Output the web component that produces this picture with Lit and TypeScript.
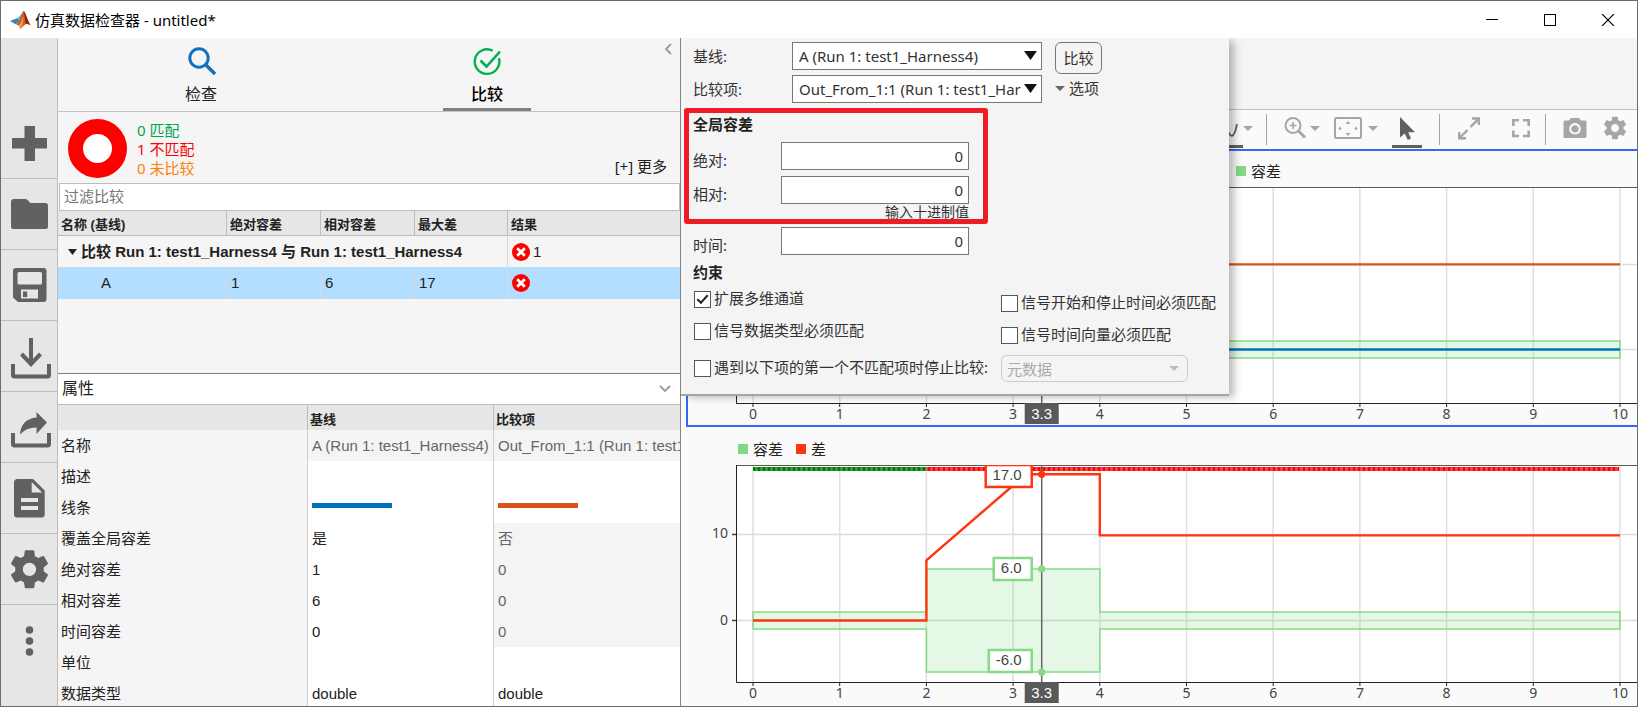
import { LitElement, html, svg, css, nothing } from "lit";
import { customElement, property, state } from "lit/decorators.js";
import { classMap } from "lit/directives/class-map.js";

const GEAR =
  "M19.43 12.98c.04-.32.07-.64.07-.98s-.03-.66-.07-.98l2.11-1.65c.19-.15.24-.42.12-.64l-2-3.46c-.12-.22-.39-.3-.61-.22l-2.49 1c-.52-.4-1.08-.73-1.69-.98l-.38-2.65C14.46 2.18 14.25 2 14 2h-4c-.25 0-.46.18-.49.42l-.38 2.65c-.61.25-1.17.59-1.69.98l-2.49-1c-.23-.09-.49 0-.61.22l-2 3.46c-.13.22-.07.49.12.64l2.11 1.65c-.04.32-.07.65-.07.98s.03.66.07.98l-2.11 1.65c-.19.15-.24.42-.12.64l2 3.46c.12.22.39.3.61.22l2.49-1c.52.4 1.08.73 1.69.98l.38 2.65c.03.24.24.42.49.42h4c.25 0 .46-.18.49-.42l.38-2.65c.61-.25 1.17-.59 1.69-.98l2.49 1c.23.09.49 0 .61-.22l2-3.46c.12-.22.07-.49-.12-.64l-2.11-1.65zM12 15.5c-1.93 0-3.5-1.57-3.5-3.5s1.57-3.5 3.5-3.5 3.5 1.57 3.5 3.5-1.57 3.5-3.5 3.5z";

const base = css`
  *,
  *::before,
  *::after {
    box-sizing: border-box;
  }
  button,
  input,
  select {
    font: inherit;
    color: inherit;
    margin: 0;
  }
  button {
    border: 0;
    background: none;
    padding: 0;
  }
  svg {
    display: block;
  }
`;

type Point = [number, number];
interface Series {
  color: string;
  points: Point[];
}
interface Marker {
  value: number;
  color: string;
  width: number;
}
interface LegendEntry {
  label: string;
  color: string;
}

/** Time plot with a tolerance band, step signals and a data cursor. */
@customElement("signal-plot")
class SignalPlot extends LitElement {
  @property({ type: Number }) yMin = 0;
  @property({ type: Number }) yMax = 1;
  @property({ attribute: false }) yLabels: number[] = [];
  @property({ attribute: false }) series: Series[] = [];
  @property({ attribute: false }) band: Point[] = [];
  @property({ attribute: false }) legend: LegendEntry[] = [];
  @property({ attribute: false }) markers: Marker[] = [];
  @property({ type: Boolean }) status = false;
  @property({ type: Boolean, reflect: true }) selected = false;
  @state() private w = 949;
  @state() private h = 238;
  private observer?: ResizeObserver;

  static styles = [
    base,
    css`
      :host {
        display: flex;
        flex-direction: column;
        min-height: 0;
        border: 2px solid transparent;
        border-right: 0;
        font-family: "Noto Sans", "Noto Sans CJK SC", sans-serif;
      }
      :host([selected]) {
        border-color: #3568f6;
      }
      .legend {
        flex: 0 0 36px;
        display: flex;
        align-items: center;
        gap: 13px;
        padding: 4px 0 0 50px;
        font-size: 15px;
        line-height: 20px;
        color: #222;
      }
      :host([selected]) .legend {
        padding-left: 548px;
      }
      .entry {
        display: flex;
        align-items: center;
        gap: 5px;
      }
      .swatch {
        width: 10px;
        height: 10px;
      }
      .canvas {
        flex: 1;
        min-height: 0;
        overflow: hidden;
      }
      text {
        font-size: 14px;
        fill: #444;
      }
      .tag {
        font-family: "Liberation Sans", sans-serif;
        font-size: 15px;
      }
      .light {
        fill: #fff;
      }
    `,
  ];

  firstUpdated() {
    const canvas = this.renderRoot.querySelector(".canvas") as HTMLElement;
    const measure = () => {
      this.w = canvas.clientWidth;
      this.h = canvas.clientHeight;
    };
    measure();
    this.observer = new ResizeObserver(measure);
    this.observer.observe(canvas);
  }

  disconnectedCallback() {
    super.disconnectedCallback();
    this.observer?.disconnect();
  }

  render() {
    const { w, h } = this;
    const ph = h - 22;
    const x = (t: number) => 65 + (t * (w - 82)) / 10;
    const y = (v: number) => ((this.yMax - v) / (this.yMax - this.yMin)) * ph;
    const path = (pts: Point[]) => pts.map(([a, b]) => `${x(a)},${y(b)}`).join(" ");
    const ticks = Array.from({ length: 11 }, (_, i) => i);
    const cursor = x(3.33);
    return html`
      <div class="legend">
        ${this.legend.map(
          (l) => html`<span class="entry"><span class="swatch" style="background:${l.color}"></span>${l.label}</span>`
        )}
      </div>
      <div class="canvas">
        <svg width=${w} height=${h}>
          <defs>
            <pattern id="pass" width="5" height="5" patternUnits="userSpaceOnUse">
              <rect width="5" height="5" fill="#2f9a2f"></rect><rect width="2" height="5" fill="#007a00"></rect>
            </pattern>
            <pattern id="fail" width="5" height="5" patternUnits="userSpaceOnUse">
              <rect width="5" height="5" fill="#ff3a3a"></rect><rect width="2" height="5" fill="#f00"></rect>
            </pattern>
          </defs>
          <rect x="48" y="0" width=${w - 48} height=${ph} fill="#fff"></rect>
          ${ticks.map(
            (t) => svg`<line x1=${x(t)} x2=${x(t)} y1="1" y2=${ph} stroke="#dfdfdf" stroke-width="1.5"></line>`
          )}
          ${[0, 10].map(
            (v) => svg`<line x1="49" x2=${w} y1=${y(v)} y2=${y(v)} stroke="#dadcdd" stroke-width="1.5"></line>`
          )}
          <polygon points=${path(this.band)} fill="rgba(127,214,127,0.2)" stroke="#86da86" stroke-width="1.5"></polygon>
          ${this.status
            ? svg`<rect x=${x(0)} y="2" width=${x(2) - x(0)} height="4" fill="url(#pass)"></rect>
                <rect x=${x(2)} y="2" width=${x(10) - x(2) - 1} height="4" fill="url(#fail)"></rect>`
            : nothing}
          <line x1="48" x2=${w} y1="0.5" y2="0.5" stroke="#58595b"></line>
          ${this.series.map(
            (s) => svg`<polyline points=${path(s.points)} fill="none" stroke=${s.color} stroke-width="2.4"></polyline>`
          )}
          <path d="M48.5 0V${ph}.5H${w}" fill="none" stroke="#222"></path>
          ${ticks.map(
            (t) => svg`<line x1=${x(t)} x2=${x(t)} y1=${ph} y2=${ph + 4} stroke="#222"></line>
              <text x=${x(t)} y=${ph + 16} text-anchor="middle">${t}</text>`
          )}
          ${this.yLabels.map(
            (v) => svg`<line x1="44" x2="48" y1=${y(v)} y2=${y(v)} stroke="#444" stroke-width="1.5"></line>
              <text x="40" y=${y(v) + 4} text-anchor="end">${v}</text>`
          )}
          <line x1=${cursor} x2=${cursor} y1="0" y2=${ph} stroke="#666" stroke-width="1.5"></line>
          ${this.markers.map((m) => {
            const top = Math.min(Math.max(Math.round(y(m.value)) - 11, 0), ph - 32);
            return svg`<rect x=${cursor - 8 - m.width} y=${top} width=${m.width - 2} height="22" fill="#fff"
                stroke=${m.color} stroke-width="2.5"></rect>
              <text class="tag" x=${cursor - 20} y=${top + 15} text-anchor="end">${m.value.toFixed(1)}</text>
              <circle cx=${cursor} cy=${y(m.value)} r="3.6" fill=${m.color}></circle>`;
          })}
          <rect x=${cursor - 17} y=${ph} width="34" height="21" fill="#58595b"></rect>
          <text class="tag light" x=${cursor} y=${ph + 16} text-anchor="middle">3.3</text>
        </svg>
      </div>
    `;
  }
}

interface PropRow {
  name: string;
  left?: string;
  right?: string;
  line?: boolean;
  dim?: "all" | "right";
}

@customElement("app-root")
class AppRoot extends LitElement {
  private rows: PropRow[] = [
    { name: "名称", left: "A (Run 1: test1_Harness4)", right: "Out_From_1:1 (Run 1: test1_Harness4)", dim: "all" },
    { name: "描述" },
    { name: "线条", line: true },
    { name: "覆盖全局容差", left: "是", right: "否", dim: "right" },
    { name: "绝对容差", left: "1", right: "0", dim: "right" },
    { name: "相对容差", left: "6", right: "0", dim: "right" },
    { name: "时间容差", left: "0", right: "0", dim: "right" },
    { name: "单位" },
    { name: "数据类型", left: "double", right: "double" },
  ];

  private signals: Series[] = [
    { color: "#0072bd", points: [[0, 0], [10, 0]] },
    { color: "#d95319", points: [[4, 10], [10, 10]] },
  ];
  private signalBand: Point[] = [[0, 1], [10, 1], [10, -1], [0, -1]];
  private diff: Series[] = [
    { color: "#ff3510", points: [[0, 0], [2, 0], [2, 7], [3, 15.7], [3.15, 17], [4, 17], [4, 9.9], [10, 9.9]] },
  ];
  private diffBand: Point[] = [
    [0, 1], [2, 1], [2, 6], [4, 6], [4, 1], [10, 1], [10, -1], [4, -1], [4, -6], [2, -6], [2, -1], [0, -1],
  ];

  static styles = [
    base,
    css`
      :host {
        display: flex;
        flex-direction: column;
        height: 100vh;
        box-sizing: border-box;
        overflow: hidden;
        border: 1px solid #6c6c6c;
        background: #fafafa;
        color: #222;
        font-family: "Liberation Sans", "Noto Sans CJK SC", sans-serif;
        font-size: 15px;
        line-height: 20px;
      }
      .titlebar {
        flex: 0 0 37px;
        display: flex;
        align-items: center;
        padding-left: 9px;
        background: #fff;
        color: #000;
        font-family: "Noto Sans", "Noto Sans CJK SC", sans-serif;
      }
      .title {
        flex: 1;
        margin: 0;
        padding-left: 4px;
        font-size: 15px;
        font-weight: 400;
      }
      .winbtn {
        width: 58px;
        height: 36px;
        display: grid;
        place-items: center;
      }
      .body {
        flex: 1;
        min-height: 0;
        display: flex;
      }

      .rail {
        flex: 0 0 57px;
        padding-top: 70px;
        background: #e6e6e6;
        border-right: 1px solid #bdbdbd;
        color: #616161;
      }
      .rail button {
        display: block;
        width: 56px;
        height: 71px;
        border-bottom: 1px solid #bdbdbd;
      }
      .rail button:last-child {
        border-bottom: 0;
      }

      .side {
        flex: 0 0 623px;
        display: flex;
        flex-direction: column;
        min-height: 0;
        background: #f5f5f5;
        border-right: 1px solid #858585;
        position: relative;
      }
      .tabs {
        flex: 0 0 74px;
        display: flex;
        justify-content: space-around;
        padding-right: 50px;
        border-bottom: 1px solid #c4c4c4;
      }
      .tab {
        width: 88px;
        display: flex;
        flex-direction: column;
        align-items: center;
        gap: 9px;
        padding-top: 8px;
        font-size: 16px;
        border-bottom: 3px solid transparent;
      }
      .tab.on {
        color: #000;
        font-weight: 500;
        border-color: #808080;
      }
      .collapse {
        position: absolute;
        top: 3px;
        right: 5px;
        padding: 2px;
      }
      .summary {
        flex: 0 0 71px;
        display: flex;
        align-items: center;
        gap: 10px;
        padding: 2px 13px 0 10px;
        font-family: "Noto Sans", "Noto Sans CJK SC", sans-serif;
      }
      .counts {
        flex: 1;
        margin: 0;
        padding: 2px 0 0;
        list-style: none;
        line-height: 19px;
      }
      .ok {
        color: #00a651;
      }
      .bad {
        color: #f00;
      }
      .none {
        color: #ff7f0e;
      }
      .more {
        align-self: flex-end;
        margin-bottom: 7px;
      }
      .filter {
        flex: 0 0 28px;
        margin-left: 1px;
        padding: 0 4px;
        border: 1px solid #bdbdbd;
        border-radius: 0;
        background: #fff;
        outline: 0;
      }
      .filter::placeholder {
        color: #757575;
      }

      table {
        width: 100%;
        table-layout: fixed;
        border-collapse: separate;
        border-spacing: 0;
      }
      th,
      td {
        padding: 0;
        text-align: left;
        white-space: nowrap;
        overflow: hidden;
      }
      .tree {
        flex: 0 0 162px;
      }
      .tree thead th {
        height: 25px;
        padding: 3px 0 0 3px;
        font-size: 13px;
        font-weight: 700;
        background: #e6e6e6;
        border-right: 1px solid #bdbdbd;
        border-bottom: 1px solid #bdbdbd;
      }
      .tree td,
      .tree tbody th {
        height: 31px;
        padding-left: 4px;
        border-right: 1px solid #d9d9d9;
      }
      .tree th:last-child,
      .tree td:last-child {
        border-right: 0;
      }
      .tree tbody th {
        border-right: 1px solid #d9d9d9;
      }
      .tree .picked td {
        height: 32px;
        background: #b3deff;
      }
      .tree .picked td:first-child {
        padding-left: 43px;
      }
      .group {
        display: flex;
        align-items: center;
        gap: 4px;
        padding-left: 6px;
      }
      .result {
        display: flex;
        align-items: center;
        gap: 3px;
      }

      .props {
        flex: 1;
        min-height: 0;
        overflow: hidden;
        border-top: 1px solid #7f7f7f;
      }
      .props-head {
        display: flex;
        align-items: center;
        justify-content: space-between;
        height: 31px;
        padding: 0 8px 0 4px;
        background: #fff;
        border-bottom: 1px solid #bdbdbd;
      }
      .props-head h2 {
        margin: 0;
        font-size: 16px;
        font-weight: 400;
      }
      .props thead td,
      .props thead th {
        height: 25px;
        padding: 4px 0 0 2px;
        background: #e6e6e6;
        font-size: 13px;
        border-right: 1px solid #bdbdbd;
      }
      .props tbody th,
      .props tbody td {
        height: 31px;
        padding-left: 4px;
        font-weight: 400;
        background: #fff;
        border-right: 1px solid #cfcfcf;
      }
      .props tbody th {
        padding-left: 3px;
        background: #f5f5f5;
      }
      .props tbody .dim {
        background: #f4f4f4;
        color: #666;
      }
      .props tr > :last-child {
        border-right: 0;
      }
      .stroke {
        display: block;
        width: 80px;
        height: 5px;
        margin-bottom: 5px;
      }
      .blue {
        background: #0072bd;
      }
      .orange {
        background: #d95319;
      }

      .view {
        flex: 1;
        min-width: 0;
        display: flex;
        flex-direction: column;
        position: relative;
      }
      .banner {
        flex: 0 0 72px;
        background: #f4f4f4;
        border-bottom: 1px solid #c0c0c0;
      }
      .toolbar {
        flex: 0 0 39px;
        display: grid;
        grid-template-columns: 30px 10px 27px 30px 18px 40px 24px 30px 34px 26px 54px 18px 42px 37px;
        justify-content: end;
        align-items: center;
        padding-right: 4px;
        color: #a6a6a6;
      }
      .tool {
        display: grid;
        place-items: center;
        height: 37px;
        border-bottom: 3px solid transparent;
      }
      .tool.on {
        color: #616161;
        border-color: #616161;
      }
      .tool.apart {
        margin-left: 24px;
      }
      .drop {
        width: 10px;
        height: 20px;
        display: grid;
        place-items: center;
        padding-bottom: 3px;
      }
      .drop.end {
        justify-self: center;
      }
      .sep {
        justify-self: center;
        width: 1px;
        height: 31px;
        background: #a6a6a6;
      }
      .charts {
        flex: 1;
        min-height: 0;
        display: grid;
        grid-template-rows: 278px 1fr;
        margin-left: 5px;
      }

      .popup {
        position: absolute;
        top: 0;
        left: 0;
        width: 548px;
        padding: 4px 0 12px 12px;
        background: #f4f4f4;
        border-bottom: 2px solid #a5a5a5;
        box-shadow: 6px 2px 8px -1px rgba(0, 0, 0, 0.28);
        clip-path: inset(0 -20px -20px 0);
        color: #333;
        font-family: "Noto Sans", "Noto Sans CJK SC", sans-serif;
      }
      .popup h3 {
        margin: 0;
        font-size: 15px;
        line-height: 20px;
        font-weight: 700;
        color: #222;
      }
      .choose {
        display: flex;
        gap: 13px;
      }
      .pairs {
        display: grid;
        grid-template-columns: 99px 250px;
        gap: 5px 0;
        align-items: center;
      }
      .pick {
        position: relative;
      }
      .pick select {
        display: block;
        width: 100%;
        height: 28px;
        padding: 0 20px 0 6px;
        appearance: none;
        border: 1px solid #777;
        border-radius: 0;
        background: #fff;
        overflow: hidden;
        opacity: 1;
      }
      .pick svg {
        position: absolute;
        right: 5px;
        top: 9px;
        pointer-events: none;
      }
      .actions {
        display: flex;
        flex-direction: column;
        align-items: flex-start;
        gap: 4px;
      }
      .compare {
        width: 47px;
        height: 32px;
        border: 1px solid #777;
        border-radius: 6px;
      }
      .options {
        display: flex;
        align-items: center;
        gap: 4px;
      }
      .numbers {
        display: grid;
        grid-template-columns: 88px 188px;
        align-items: end;
        row-gap: 6px;
        margin-top: 8px;
      }
      .tolerance {
        padding-top: 11px;
      }
      .numbers input {
        height: 28px;
        padding: 0 5px;
        border: 1px solid #777;
        border-radius: 0;
        text-align: right;
        background: #fff;
      }
      .hint {
        width: 276px;
        margin: 0;
        font-size: 14px;
        line-height: 15px;
        text-align: right;
      }
      .numbers.time {
        margin: 8px 0 7px;
      }
      .highlight {
        position: absolute;
        left: 3px;
        top: 70px;
        width: 304px;
        height: 116px;
        border: 5px solid #ed1c24;
        border-radius: 3px;
        pointer-events: none;
      }
      .checks {
        display: grid;
        grid-template-columns: 307px auto;
        justify-content: start;
        align-items: start;
        padding-top: 9px;
      }
      .stack {
        display: grid;
        gap: 15px;
      }
      .stack.low {
        padding-top: 4px;
      }
      .check {
        display: flex;
        align-items: center;
        gap: 3px;
        height: 17px;
      }
      .check input {
        appearance: none;
        display: grid;
        place-items: center;
        width: 17px;
        height: 17px;
        margin-left: 1px;
        border: 1px solid #555;
        background: #fff;
      }
      .check input:checked::before {
        content: "";
        width: 11px;
        height: 6px;
        margin-bottom: 4px;
        border: solid #222;
        border-width: 0 0 2px 2px;
        transform: rotate(-48deg);
      }
      .check label {
        line-height: 17px;
        padding-bottom: 2px;
      }
      .stop {
        display: grid;
        grid-template-columns: 308px 187px;
        align-items: center;
        padding-top: 11px;
      }
      .pick.off select {
        height: 27px;
        padding-left: 5px;
        color: #aaa;
        background: transparent;
        border-color: #ccc;
        border-radius: 6px;
      }
      .pick.off svg {
        right: 9px;
        top: 11px;
      }
    `,
  ];

  private caret(w: number, h: number, fill: string) {
    return html`<svg width=${w} height=${h}><path d="M0 0H${w}L${w / 2} ${h}Z" fill=${fill}></path></svg>`;
  }

  private cross() {
    return html`<svg width="18" height="18">
      <circle cx="9" cy="9" r="9" fill="#f00"></circle>
      <path d="M5.200 5.200l7.600 7.600M12.800 5.200l-7.600 7.600" stroke="#fff" stroke-width="2.800"></path>
    </svg>`;
  }

  private railButton(label: string, glyph: unknown) {
    return html`<button aria-label=${label}>
      <svg width="56" height="70" fill="currentColor">${glyph}</svg>
    </button>`;
  }

  private renderRail() {
    const tray = (y: number) =>
      svg`<path d="M12 ${y}V${y + 11}Q12 ${y + 12.5} 13.5 ${y + 12.5}H46.500Q48 ${y + 12.5} 48 ${y + 11}V${y}" fill="none" stroke="currentColor" stroke-width="4"></path>`;
    return html`<nav class="rail">
      ${this.railButton("新建", svg`<path d="M23.500 18h10.500v12H46v10.500H34V53H23.500V40.500H11V30h12.500z"></path>`)}
      ${this.railButton(
        "打开",
        svg`<path d="M13 20h11.500q1 0 2 1l3 3H44.500q2.500 0 2.500 2.500v21q0 2.500-2.500 2.500h-32Q10 50 10 47.500V23q0-3 3-3z"></path>`
      )}
      ${this.railButton(
        "保存",
        svg`<path fill-rule="evenodd" d="M15 18H42.500q3 0 3 3V49q0 3-3 3H17l-5-4.500V21q0-3 3-3zM18 22q-1.500 0-1.500 1.500V33q0 1.500 1.500 1.500H39.500q1.500 0 1.500-1.500V23.500Q41 22 39.500 22zM20 39.500V48.500H37V39.500zM22 41.500h4.200V47H22z"></path>`
      )}
      ${this.railButton(
        "导入",
        svg`<path d="M30 17V42M20.500 33l9.500 10 9.500-10" fill="none" stroke="currentColor" stroke-width="4"></path>${tray(43)}`
      )}
      ${this.railButton(
        "导出",
        svg`<path d="M46 30.500L35.500 20V25.500Q20 27 19 42.500Q25 35.500 35.500 35.500V42z"></path>${tray(41)}`
      )}
      ${this.railButton(
        "报告",
        svg`<path fill-rule="evenodd" d="M16.500 16H32L43.700 27.500V51.500q0 3-3 3H16.500q-3.500 0-3.500-3V19.500q0-3.500 3.500-3.500zM30.700 19v10.500h10.500zM20 35v4H37v-4zM20 43v4H37v-4z"></path>`
      )}
      ${this.railButton("设置", svg`<path transform="translate(5.700 12.500) scale(1.900)" d=${GEAR}></path>`)}
      ${this.railButton(
        "更多",
        svg`<circle cx="28.500" cy="24" r="3.800"></circle><circle cx="28.500" cy="35" r="3.800"></circle><circle cx="28.500" cy="46" r="3.800"></circle>`
      )}
    </nav>`;
  }

  private renderSide() {
    return html`<section class="side">
      <div class="tabs" role="tablist">
        <button class="tab" role="tab" aria-selected="false">
          <svg width="30" height="30" fill="none" stroke="#0f71c0">
            <circle cx="13" cy="12" r="9.200" stroke-width="3"></circle>
            <path d="M19.500 18.500L29 28" stroke-width="3.400"></path>
          </svg>
          检查
        </button>
        <button class="tab on" role="tab" aria-selected="true">
          <svg width="30" height="30" fill="none" stroke="#00b050" stroke-width="2.400">
            <path d="M20.600 4.600A12.300 12.300 0 1 0 26.900 12.200"></path>
            <path d="M8.500 14.500l6 6L28 5.500" stroke-width="2.600"></path>
          </svg>
          比较
        </button>
      </div>
      <button class="collapse" aria-label="收起">
        <svg width="10" height="12"><path d="M8 1L3 6l5 5" fill="none" stroke="#999" stroke-width="1.800"></path></svg>
      </button>
      <div class="summary">
        <svg width="59" height="59"><circle cx="29.500" cy="29.500" r="22" fill="#fff" stroke="#f00" stroke-width="15"></circle></svg>
        <ul class="counts">
          <li class="ok">0 匹配</li>
          <li class="bad">1 不匹配</li>
          <li class="none">0 未比较</li>
        </ul>
        <button class="more">[+] 更多</button>
      </div>
      <input class="filter" type="text" placeholder="过滤比较" aria-label="过滤比较" />
      <div class="tree">
        <table>
          <colgroup>
            <col width="169" />
            <col width="94" />
            <col width="94" />
            <col width="93" />
            <col />
          </colgroup>
          <thead>
            <tr><th>名称 (基线)</th><th>绝对容差</th><th>相对容差</th><th>最大差</th><th>结果</th></tr>
          </thead>
          <tbody>
            <tr>
              <th colspan="4">
                <div class="group">${this.caret(9, 6, "#222")}比较 Run 1: test1_Harness4 与 Run 1: test1_Harness4</div>
              </th>
              <td><div class="result">${this.cross()}1</div></td>
            </tr>
            <tr class="picked">
              <td>A</td><td>1</td><td>6</td><td>17</td>
              <td><div class="result">${this.cross()}</div></td>
            </tr>
          </tbody>
        </table>
      </div>
      <div class="props">
        <div class="props-head">
          <h2>属性</h2>
          <svg width="14" height="12"><path d="M2 3l5 5 5-5" fill="none" stroke="#999" stroke-width="1.800"></path></svg>
        </div>
        <table>
          <colgroup>
            <col width="250" />
            <col width="186" />
            <col />
          </colgroup>
          <thead>
            <tr><td></td><th>基线</th><th>比较项</th></tr>
          </thead>
          <tbody>
            ${this.rows.map(
              (r) => html`<tr>
                <th>${r.name}</th>
                <td class=${classMap({ dim: r.dim === "all" })}>
                  ${r.line ? html`<span class="stroke blue"></span>` : r.left ?? nothing}
                </td>
                <td class=${classMap({ dim: !!r.dim })}>
                  ${r.line ? html`<span class="stroke orange"></span>` : r.right ?? nothing}
                </td>
              </tr>`
            )}
          </tbody>
        </table>
      </div>
    </section>`;
  }

  private renderToolbar() {
    const drop = (end = false) =>
      html`<button class=${classMap({ drop: true, end })} aria-label="展开">${this.caret(10, 5, "#a6a6a6")}</button>`;
    return html`<div class="toolbar">
      <button class="tool on" aria-label="光标">
        <svg width="26" height="24" fill="none" stroke="currentColor" stroke-width="1.800">
          <path d="M2 15C5 2 9 2 12 12S19 24 22 8"></path>
        </svg>
      </button>
      ${drop()}
      <span class="sep"></span>
      <button class="tool" aria-label="缩放">
        <svg width="24" height="24" fill="none" stroke="currentColor" stroke-width="2">
          <circle cx="10" cy="9.500" r="7.500"></circle>
          <path d="M15.500 15L22 21.500" stroke-width="3"></path>
          <path d="M6.500 9.500h7M10 6v7" stroke-width="1.600"></path>
        </svg>
      </button>
      ${drop()}
      <button class="tool" aria-label="适应视图">
        <svg width="28" height="24" fill="currentColor">
          <rect x="1" y="2" width="26" height="20" rx="1.500" fill="none" stroke="currentColor" stroke-width="2"></rect>
          <path d="M14 5l2.500 3h-5zM14 20l2.500-3h-5zM4 12.500l3-2v4zM24 12.500l-3-2v4z"></path>
        </svg>
      </button>
      ${drop()}
      <button class="tool on" aria-label="选择">
        <svg width="18" height="24" fill="currentColor">
          <path d="M2 1V21.500L6.800 17.500L9.800 24L13 22.600L10.200 16.200H17z"></path>
        </svg>
      </button>
      <span class="sep"></span>
      <button class="tool" aria-label="展开视图">
        <svg width="24" height="24" fill="none" stroke="currentColor" stroke-width="2.400">
          <path d="M15 2.500h6.800V9M21 3.300l-7.500 7.500M2.200 16v6.300H9M3 21.500l7.500-7.500"></path>
        </svg>
      </button>
      <button class="tool apart" aria-label="全屏">
        <svg width="20" height="20" fill="none" stroke="currentColor" stroke-width="2.600">
          <path d="M2.300 8V2.300H8M12 2.300h5.700V8M17.700 12.500V18H12M8 18H2.300V12.500"></path>
        </svg>
      </button>
      <span class="sep"></span>
      <button class="tool" aria-label="快照">
        <svg width="24" height="24" fill="currentColor">
          <path fill-rule="evenodd" d="M8 2h8l2 2.500h4q1.500 0 1.500 1.500V20.500q0 1.500-1.500 1.500H2Q.500 22 .500 20.500V6Q.500 4.500 2 4.500h4zM12 7a5.800 5.800 0 1 0 .01 0zM12 9.200a3.700 3.700 0 1 1-.01 0z"></path>
        </svg>
      </button>
      <button class="tool" aria-label="设置">
        <svg width="26" height="26" viewBox="0.500 0.500 23 23" fill="currentColor"><path d=${GEAR}></path></svg>
      </button>
    </div>`;
  }

  private renderPopup() {
    const check = (id: string, label: string, on = false) => html`<div class="check">
      <input type="checkbox" id=${id} ?checked=${on} /><label for=${id}>${label}</label>
    </div>`;
    return html`<form class="popup">
      <div class="choose">
        <div class="pairs">
          <label for="baseline">基线:</label>
          <div class="pick">
            <select id="baseline"><option>A (Run 1: test1_Harness4)</option></select>
            ${this.caret(13, 9, "#111")}
          </div>
          <label for="against">比较项:</label>
          <div class="pick">
            <select id="against"><option>Out_From_1:1 (Run 1: test1_Harness4)</option></select>
            ${this.caret(13, 9, "#111")}
          </div>
        </div>
        <div class="actions">
          <button type="button" class="compare">比较</button>
          <button type="button" class="options">${this.caret(10, 5, "#666")}选项</button>
        </div>
      </div>
      <div class="tolerance">
        <h3>全局容差</h3>
        <div class="numbers">
          <label for="abs">绝对:</label><input id="abs" type="text" value="0" />
          <label for="rel">相对:</label><input id="rel" type="text" value="0" />
        </div>
        <p class="hint">输入十进制值</p>
      </div>
      <div class="numbers time">
        <label for="time">时间:</label><input id="time" type="text" value="0" />
      </div>
      <h3>约束</h3>
      <div class="checks">
        <div class="stack">
          ${check("expand", "扩展多维通道", true)} ${check("types", "信号数据类型必须匹配")}
        </div>
        <div class="stack low">
          ${check("span", "信号开始和停止时间必须匹配")} ${check("vector", "信号时间向量必须匹配")}
        </div>
      </div>
      <div class="stop">
        ${check("stop", "遇到以下项的第一个不匹配项时停止比较:")}
        <div class="pick off">
          <select disabled aria-label="停止条件"><option>元数据</option></select>
          ${this.caret(10, 5, "#bbb")}
        </div>
      </div>
      <div class="highlight"></div>
    </form>`;
  }

  render() {
    return html`
      <header class="titlebar">
        <svg width="21" height="20">
          <path d="M0 11L7 8.200L10 10.500L6 14.500z" fill="#3f7fb8"></path>
          <path d="M7 8.200C10 7.500 11.500 2.500 13.500 1L10 10.500z" fill="#5aa0c8"></path>
          <path d="M6 14.500C10 12.500 11.500 5 13.500 1C15 1 17 9 20.500 15.500C17 12.500 14.500 14 10.500 19C9.500 16 8 14.500 6 14.500z" fill="#d9541e"></path>
          <path d="M13.500 1C15 1 17 9 20.500 15.500C18.500 13.800 17 13.500 15.500 14C15 9 14.500 4 13.500 1z" fill="#8c2416"></path>
          <path d="M8.500 15.500C11 13.500 12.500 9 13.200 6C14 10 13 14 10.500 19z" fill="#f3a23a"></path>
        </svg>
        <h1 class="title">仿真数据检查器 - untitled*</h1>
        <button class="winbtn" aria-label="最小化">
          <svg width="12" height="12"><path d="M0 5.500h12" stroke="#000"></path></svg>
        </button>
        <button class="winbtn" aria-label="最大化">
          <svg width="12" height="12"><rect x="0.500" y="0.500" width="11" height="11" fill="none" stroke="#000"></rect></svg>
        </button>
        <button class="winbtn" aria-label="关闭">
          <svg width="12" height="12"><path d="M0 0l12 12M12 0L0 12" stroke="#000" stroke-width="1.200"></path></svg>
        </button>
      </header>
      <main class="body">
        ${this.renderRail()} ${this.renderSide()}
        <section class="view">
          <div class="banner"></div>
          ${this.renderToolbar()}
          <div class="charts">
            <signal-plot
              selected
              .yMax=${19.1}
              .yMin=${-6.3}
              .series=${this.signals}
              .band=${this.signalBand}
              .legend=${[{ label: "容差", color: "#82d982" }]}
            ></signal-plot>
            <signal-plot
              status
              .yMax=${18.08}
              .yMin=${-7.15}
              .yLabels=${[0, 10]}
              .series=${this.diff}
              .band=${this.diffBand}
              .markers=${[
                { value: 17, color: "#ff3510", width: 48 },
                { value: 6, color: "#86da86", width: 40 },
                { value: -6, color: "#86da86", width: 45 },
              ]}
              .legend=${[
                { label: "容差", color: "#82d982" },
                { label: "差", color: "#ff3510" },
              ]}
            ></signal-plot>
          </div>
          ${this.renderPopup()}
        </section>
      </main>
    `;
  }
}
